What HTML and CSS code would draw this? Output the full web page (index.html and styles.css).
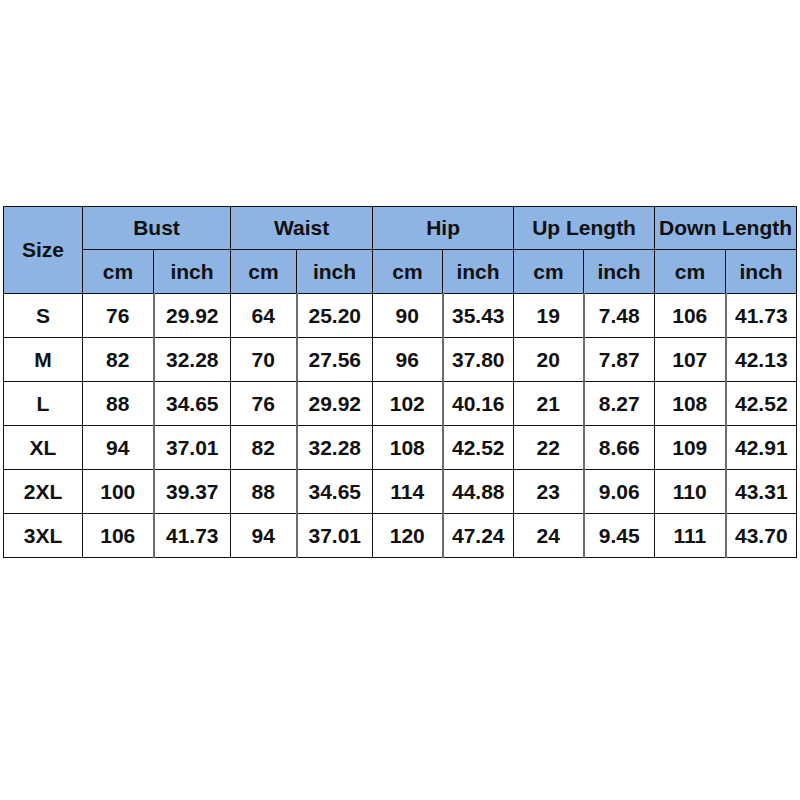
FILE: index.html
```html
<!DOCTYPE html>
<html>
<head>
<meta charset="utf-8">
<link rel="stylesheet" href="styles.css">
</head>
<body>
<table class="size-table">
  <colgroup>
    <col class="c-size">
    <col class="c71"><col class="c77">
    <col class="c66"><col class="c76">
    <col class="c70"><col class="c71">
    <col class="c70"><col class="c71">
    <col class="c71"><col class="c71">
  </colgroup>
  <thead>
    <tr class="head1">
      <th rowspan="2">Size</th>
      <th colspan="2">Bust</th>
      <th colspan="2">Waist</th>
      <th colspan="2">Hip</th>
      <th colspan="2">Up Length</th>
      <th colspan="2">Down Length</th>
    </tr>
    <tr class="head2">
      <th>cm</th><th class="in">inch</th>
      <th>cm</th><th class="in">inch</th>
      <th>cm</th><th class="in">inch</th>
      <th>cm</th><th class="in">inch</th>
      <th>cm</th><th class="in">inch</th>
    </tr>
  </thead>
  <tbody>
    <tr><td>S</td><td>76</td><td class="in">29.92</td><td>64</td><td class="in">25.20</td><td>90</td><td class="in">35.43</td><td>19</td><td class="in">7.48</td><td>106</td><td class="in">41.73</td></tr>
    <tr><td>M</td><td>82</td><td class="in">32.28</td><td>70</td><td class="in">27.56</td><td>96</td><td class="in">37.80</td><td>20</td><td class="in">7.87</td><td>107</td><td class="in">42.13</td></tr>
    <tr><td>L</td><td>88</td><td class="in">34.65</td><td>76</td><td class="in">29.92</td><td>102</td><td class="in">40.16</td><td>21</td><td class="in">8.27</td><td>108</td><td class="in">42.52</td></tr>
    <tr><td>XL</td><td>94</td><td class="in">37.01</td><td>82</td><td class="in">32.28</td><td>108</td><td class="in">42.52</td><td>22</td><td class="in">8.66</td><td>109</td><td class="in">42.91</td></tr>
    <tr><td>2XL</td><td>100</td><td class="in">39.37</td><td>88</td><td class="in">34.65</td><td>114</td><td class="in">44.88</td><td>23</td><td class="in">9.06</td><td>110</td><td class="in">43.31</td></tr>
    <tr><td>3XL</td><td>106</td><td class="in">41.73</td><td>94</td><td class="in">37.01</td><td>120</td><td class="in">47.24</td><td>24</td><td class="in">9.45</td><td>111</td><td class="in">43.70</td></tr>
  </tbody>
</table>
</body>
</html>
```
FILE: styles.css
```css
html, body {
  margin: 0;
  padding: 0;
  background: #ffffff;
}
body {
  padding: 206px 0 0 3px;
  font-family: "Liberation Sans", Arial, sans-serif;
}
.size-table {
  border-collapse: collapse;
  table-layout: fixed;
  width: 794px;
  font-weight: bold;
  font-size: 21px;
  color: #111;
}
.c-size { width: 79px; }
.c66 { width: 66px; }
.c70 { width: 70px; }
.c71 { width: 71px; }
.c76 { width: 76px; }
.c77 { width: 77px; }
.size-table th,
.size-table td {
  border: 1px solid #111;
  padding: 0;
  text-align: center;
  vertical-align: middle;
  font-weight: bold;
  white-space: nowrap;
  line-height: 24px;
}
.size-table thead th {
  background: #8db4e2;
}
.head1 th { height: 42px; }
.head2 th { height: 43px; }
.size-table td { height: 43px; }
.size-table td.in {
  border-left: 2px solid #6b6b6b;
}
```
